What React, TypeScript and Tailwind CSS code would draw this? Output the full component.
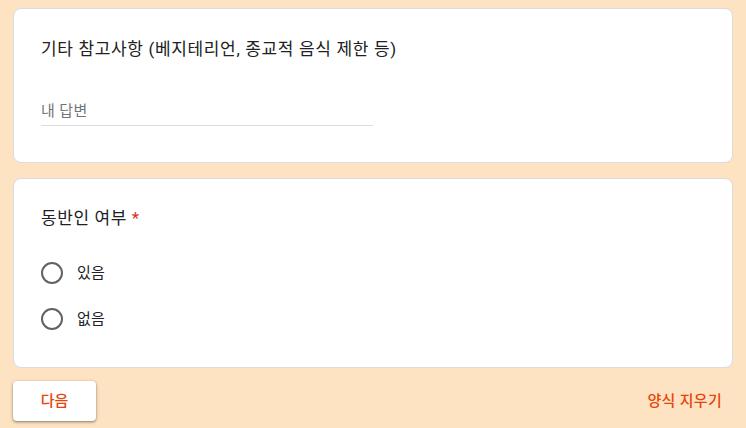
import React from 'react';

const font = { fontFamily: 'Roboto, "Noto Sans CJK KR", sans-serif' };

function Radio({ label }: { label: string }) {
  return (
    <label className="flex items-center h-[46px] gap-[14px] cursor-pointer">
      <span className="w-[22px] h-[22px] rounded-full border-2 border-[#5f6368] bg-white" />
      <span className="text-[15px] tracking-[0.3px] text-[#202124]">{label}</span>
    </label>
  );
}

function App() {
  return (
    <div className="min-h-screen bg-[#fde3c1] px-[13px] pt-[8px]" style={font}>
      {/* 기타 참고사항 */}
      <div className="bg-white border border-[#dadce0] rounded-[8px] h-[155px] px-[27px] pt-[27px]">
        <div className="text-[17px] leading-[26px] text-[#202124] tracking-[0.65px]">
          기타 참고사항 (베지테리언, 종교적 음식 제한 등)
        </div>
        <div className="mt-[37px] w-[332px] border-b border-[#dadce0] pb-[2px]">
          <input
            type="text"
            placeholder="내 답변"
            className="w-full text-[15px] leading-[22px] tracking-[0.4px] text-[#202124] placeholder:text-[#70757a] outline-none bg-transparent"
          />
        </div>
      </div>

      {/* 동반인 여부 */}
      <div className="mt-[15px] bg-white border border-[#dadce0] rounded-[8px] h-[190px] px-[27px] pt-[26px]">
        <div className="text-[17px] leading-[26px] tracking-[0.6px] text-[#202124]">
          동반인 여부 <span className="text-[#d93025]">*</span>
        </div>
        <div className="mt-[19px] flex flex-col">
          <Radio label="있음" />
          <Radio label="없음" />
        </div>
      </div>

      {/* footer */}
      <div className="mt-[13px] flex items-center justify-between">
        <button className="w-[83px] h-[40px] bg-white rounded-[4px] shadow-[0_1px_2px_rgba(0,0,0,0.3),0_1px_3px_1px_rgba(0,0,0,0.15)] text-[15px] font-medium text-[#e8430a]">
          다음
        </button>
        <button className="pr-[11px] text-[15px] tracking-[0.3px] font-medium text-[#e8430a]">양식 지우기</button>
      </div>
    </div>
  );
}

export default App;
